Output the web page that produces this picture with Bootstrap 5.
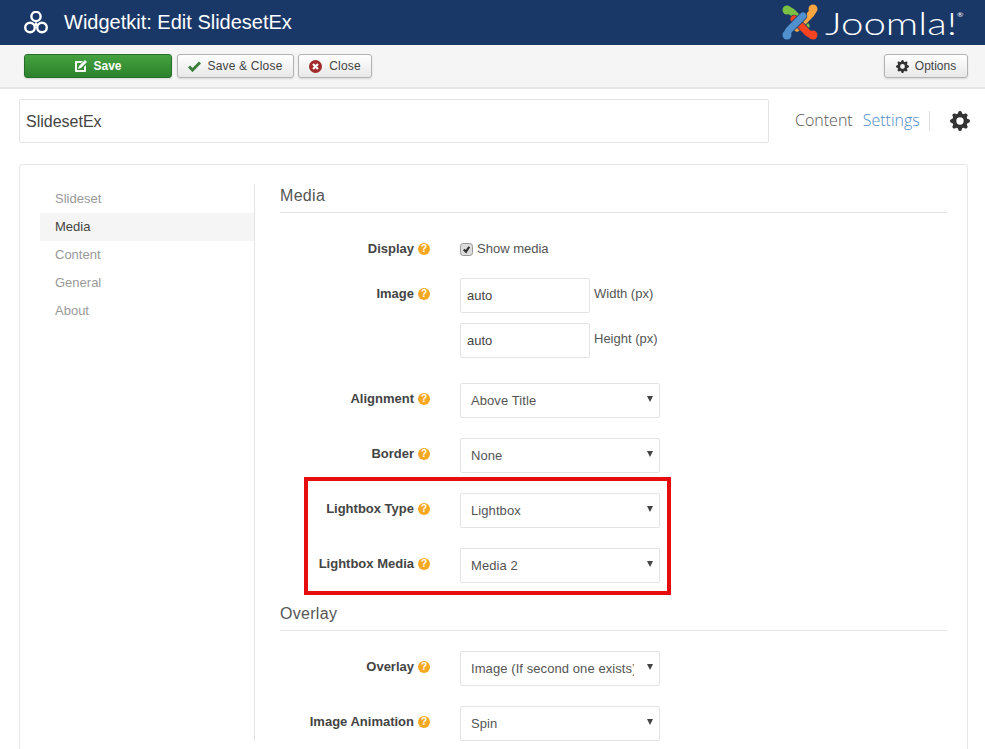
<!DOCTYPE html>
<html lang="en">
<head>
<meta charset="utf-8">
<title>Widgetkit: Edit SlidesetEx</title>
<link href="https://cdn.jsdelivr.net/npm/bootstrap@5.3.0/dist/css/bootstrap.min.css" rel="stylesheet">
<style>
html,body{height:749px;overflow:hidden}
body{font-family:"Liberation Sans",Arial,sans-serif;font-size:13px;color:#555;background:#fff}
.wk-head{height:45px;background:#1a3867;color:#fff;padding-left:24px}
.wk-title{font-size:20px;line-height:45px;margin:0 0 0 16px;font-weight:400;color:#fff}
.wk-logo-word{display:inline-block;width:134px;margin:0 26px 0 6px;font-family:"Lato","Open Sans",sans-serif;font-weight:300;font-size:31px;line-height:45px;color:#fff;white-space:nowrap;transform:scaleX(1.3);transform-origin:left center;position:relative;top:1px}
.wk-logo-word sup{font-size:6px;top:-18px;letter-spacing:0;font-weight:400;position:relative;vertical-align:baseline;margin-left:0}
.wk-bar{height:44px;background:#f5f5f5;border-bottom:2px solid #e6e6e6;padding:9px 17px 0 24px}
.wk-btn{height:24px;padding:0;font-size:12px;line-height:22px;letter-spacing:.2px;white-space:nowrap;color:#444;background:linear-gradient(#fff,#e8e8e8);border:1px solid #b3b3b3;border-radius:3px;display:inline-flex;align-items:center;justify-content:center;gap:6px;box-shadow:0 1px 2px rgba(0,0,0,.12)}
.wk-btn:hover{color:#444;border-color:#b3b3b3}
.wk-save{width:148px;font-weight:700;letter-spacing:0;color:#fff;background:linear-gradient(#45a23f,#2c822d);border-color:#24702a}
.wk-save:hover{color:#fff;border-color:#24702a}
.wk-close-x{width:117px;margin-left:5px}
.wk-close-c{width:74px;margin-left:4px;gap:7px}
.wk-opt{width:84px;letter-spacing:0}
.wk-top{padding:10px 16px 0 19px}
.wk-name{flex:none;width:750px;height:44px;border:1px solid #e3e3e3;border-radius:2px;font-size:16px;color:#444;padding:2px 6px 0;background:#fff;box-shadow:none}
.wk-tabs{font-family:"Open Sans",sans-serif;font-weight:300;font-size:16px;line-height:20px}
.wk-tabs a{text-decoration:none;padding-bottom:2px}
.wk-tab-c{color:#555;margin-left:26px}
.wk-tab-s{color:#4f8ac6;margin-left:10px}
.wk-sep{width:1px;height:20px;background:#ddd;margin:0 20px 0 9px}
.wk-card{margin:21px 17px 0 19px;border:1px solid #e6e6e6;border-radius:3px;padding:20px;background:#fff;height:620px}
.wk-side{width:215px;border-right:1px solid #e3e3e3;height:557px;flex:none;margin-top:-1px;padding-top:1px}
.wk-side a{display:block;height:28px;line-height:28px;padding-left:15px;color:#999;text-decoration:none;font-size:13px}
.wk-side a.wk-on{background:#f5f5f5;color:#444}
.wk-main{margin-left:25px;flex:1 1 auto}
.wk-h{font-size:16px;letter-spacing:.3px;font-weight:400;color:#555;height:28px;line-height:22px;margin:0;border-bottom:1px solid #e3e3e3}
.wk-mb{margin-bottom:25px}
.wk-mb20{margin-bottom:20px}
.wk-row{display:flex;margin-bottom:20px}
.wk-row.wk-gap{margin-bottom:25px}
.wk-row.wk-first{margin-bottom:19px;padding-top:1px}
.wk-lab{width:150px;flex:none;margin-right:30px;text-align:right;font-weight:700;color:#444;line-height:20px;padding-top:6px;margin-bottom:0;display:flex;justify-content:flex-end;align-items:flex-start;gap:4px}
.wk-lab.wk-flat{padding-top:0}
.wk-q{width:12px;height:12px;border-radius:50%;background:#f7a823;color:#fff;font-size:10px;font-weight:700;line-height:12px;text-align:center;margin-top:4px;flex:none}
.wk-stack{display:flex;flex-direction:column;gap:10px}
.wk-in{width:130px;height:35px;border:1px solid #e3e3e3;border-radius:2px;font-size:13px;color:#444;padding:0 6px;box-shadow:none}
.wk-sel{width:200px;height:35px;border:1px solid #e3e3e3;border-radius:2px;font-size:13px;letter-spacing:.08px;color:#555;padding:1px 25px 0 10px;box-shadow:none;background-size:6px 6px;background-position:right 6px top 12px;background-image:url("data:image/svg+xml,%3csvg xmlns='http://www.w3.org/2000/svg' viewBox='0 0 6 6'%3e%3cpath fill='%23444' d='M0 0h6L3 6z'/%3e%3c/svg%3e")}
.wk-unit{margin-left:4px;line-height:20px;padding-top:6px;color:#555}
.wk-check{width:13px;height:13px;margin:0 4px 0 0;flex:none;border-color:#999;border-radius:2px}
.wk-check:checked{background-color:#ddd;border-color:#999;background-size:100% 100%;background-image:url("data:image/svg+xml,%3csvg xmlns='http://www.w3.org/2000/svg' viewBox='0 0 20 20'%3e%3cpath fill='none' stroke='%23333' stroke-width='4' d='M5 10l4 4 6-9'/%3e%3c/svg%3e")}
.wk-chk-txt{line-height:20px;color:#555;display:flex;align-items:center;margin:0}
.wk-hl{position:relative}
.wk-box{position:absolute;left:24px;top:-16px;width:367px;height:118px;border:4px solid #e50d0d;pointer-events:none}
</style>
</head>
<body>
<header class="wk-head d-flex align-items-center">
  <svg width="24" height="24" viewBox="0 0 24 24" fill="none" stroke="#fff" stroke-width="2.4">
    <circle cx="12" cy="5.500" r="4.600"/><circle cx="6" cy="16.500" r="4.800"/><circle cx="18" cy="16.500" r="4.800"/>
    <path d="M12 10.500l-2.600 4.600h5.200z" fill="#fff" stroke="none"/>
  </svg>
  <h1 class="wk-title flex-grow-1">Widgetkit: Edit SlidesetEx</h1>
  <svg width="37" height="37" viewBox="0 0 37 37" fill="none" stroke-linecap="round">
    <path stroke="#1a3867" stroke-width="8.500" d="M5 6C9 6 11 9 13 11L24 22"/>
    <path stroke="#7ac143" stroke-width="7" d="M5 6C9 6 11 9 13 11L24 22"/>
    <path stroke="#1a3867" stroke-width="8.500" d="M31 5C31 9 28 11 26 13L15 24"/>
    <path stroke="#f9a541" stroke-width="7" d="M31 5C31 9 28 11 26 13L15 24"/>
    <path stroke="#1a3867" stroke-width="8.500" d="M31 31C27 31 25 28 23 26L12 15"/>
    <path stroke="#f44321" stroke-width="7" d="M31 31C27 31 25 28 23 26L12 15"/>
    <path stroke="#1a3867" stroke-width="8.500" d="M5 31C5 27 8 25 10 23L21 12"/>
    <path stroke="#5091cd" stroke-width="7" d="M5 31C5 27 8 25 10 23L21 12"/>
    <circle cx="5" cy="6" r="4.500" fill="#7ac143"/><circle cx="31" cy="5" r="4.500" fill="#f9a541"/>
    <circle cx="31" cy="31" r="4.500" fill="#f44321"/><circle cx="5" cy="31" r="4.500" fill="#5091cd"/>
  </svg>
  <span class="wk-logo-word">Joomla!<sup>®</sup></span>
</header>

<div class="wk-bar d-flex">
  <a href="#" class="btn wk-btn wk-save">
    <svg width="13" height="13" viewBox="0 0 13 13"><path fill="#fff" d="M2 1h7L7 3H3v7h7V7l2-2v6a1 1 0 0 1-1 1H2a1 1 0 0 1-1-1V2a1 1 0 0 1 1-1z"/><path fill="#fff" d="M11 0l2 2-6 6-3 1 1-3z"/></svg>Save</a>
  <a href="#" class="btn wk-btn wk-close-x">
    <svg width="13" height="11" viewBox="0 0 13 11"><path fill="none" stroke="#3b7d3a" stroke-width="3" d="M1 5.500l3.500 3.500L12 1.500"/></svg>Save &amp; Close</a>
  <a href="#" class="btn wk-btn wk-close-c">
    <svg width="13" height="13" viewBox="0 0 13 13"><circle cx="6.500" cy="6.500" r="6.500" fill="#a12a2a"/><path stroke="#fff" stroke-width="2.200" d="M4 4l5 5M9 4l-5 5"/></svg>Close</a>
  <a href="#" class="btn wk-btn wk-opt ms-auto">
    <svg width="13" height="13" viewBox="0 0 16 16"><path fill="#333" fill-rule="evenodd" d="M9.405 1.050c-.413-1.400-2.397-1.400-2.810 0l-.1.340a1.464 1.464 0 0 1-2.105.872l-.31-.17c-1.283-.698-2.686.705-1.987 1.987l.169.311c.446.82.023 1.841-.872 2.105l-.34.1c-1.400.413-1.400 2.397 0 2.810l.34.1a1.464 1.464 0 0 1 .872 2.105l-.17.31c-.698 1.283.705 2.686 1.987 1.987l.311-.169a1.464 1.464 0 0 1 2.105.872l.1.34c.413 1.400 2.397 1.400 2.810 0l.1-.34a1.464 1.464 0 0 1 2.105-.872l.31.17c1.283.698 2.686-.705 1.987-1.987l-.169-.311a1.464 1.464 0 0 1 .872-2.105l.34-.1c1.400-.413 1.400-2.397 0-2.810l-.34-.1a1.464 1.464 0 0 1-.872-2.105l.17-.31c.698-1.283-.705-2.686-1.987-1.987l-.311.169a1.464 1.464 0 0 1-2.105-.872l-.1-.34zM8 10.930a2.929 2.929 0 1 1 0-5.860 2.929 2.929 0 0 1 0 5.858z"/></svg>Options</a>
</div>

<div class="wk-top d-flex align-items-center">
  <input class="form-control wk-name" type="text" value="SlidesetEx">
  <nav class="wk-tabs d-flex align-items-center">
    <a href="#" class="wk-tab-c">Content</a>
    <a href="#" class="wk-tab-s">Settings</a>
    <span class="wk-sep"></span>
    <svg width="20" height="20" viewBox="0 0 16 16"><path fill="#333" fill-rule="evenodd" d="M9.405 1.050c-.413-1.400-2.397-1.400-2.810 0l-.1.340a1.464 1.464 0 0 1-2.105.872l-.31-.17c-1.283-.698-2.686.705-1.987 1.987l.169.311c.446.82.023 1.841-.872 2.105l-.34.1c-1.400.413-1.400 2.397 0 2.810l.34.1a1.464 1.464 0 0 1 .872 2.105l-.17.31c-.698 1.283.705 2.686 1.987 1.987l.311-.169a1.464 1.464 0 0 1 2.105.872l.1.34c.413 1.400 2.397 1.400 2.810 0l.1-.34a1.464 1.464 0 0 1 2.105-.872l.31.17c1.283.698 2.686-.705 1.987-1.987l-.169-.311a1.464 1.464 0 0 1 .872-2.105l.34-.1c1.400-.413 1.400-2.397 0-2.810l-.34-.1a1.464 1.464 0 0 1-.872-2.105l.17-.31c.698-1.283-.705-2.686-1.987-1.987l-.311.169a1.464 1.464 0 0 1-2.105-.872l-.1-.34zM8 10.930a2.929 2.929 0 1 1 0-5.860 2.929 2.929 0 0 1 0 5.858z"/></svg>
  </nav>
</div>

<div class="wk-card d-flex">
  <nav class="wk-side">
    <a href="#">Slideset</a>
    <a href="#" class="wk-on">Media</a>
    <a href="#">Content</a>
    <a href="#">General</a>
    <a href="#">About</a>
  </nav>
  <main class="wk-main">
    <h2 class="wk-h wk-mb">Media</h2>
    <div class="wk-row wk-first">
      <label class="wk-lab wk-flat">Display <span class="wk-q">?</span></label>
      <label class="wk-chk-txt"><input class="form-check-input wk-check" type="checkbox" checked>Show media</label>
    </div>
    <div class="wk-row wk-gap">
      <label class="wk-lab">Image <span class="wk-q">?</span></label>
      <div class="wk-stack">
        <div class="d-flex"><input class="form-control wk-in" type="text" value="auto"><span class="wk-unit">Width (px)</span></div>
        <div class="d-flex"><input class="form-control wk-in" type="text" value="auto"><span class="wk-unit">Height (px)</span></div>
      </div>
    </div>
    <div class="wk-row">
      <label class="wk-lab">Alignment <span class="wk-q">?</span></label>
      <select class="form-select wk-sel"><option>Above Title</option></select>
    </div>
    <div class="wk-row">
      <label class="wk-lab">Border <span class="wk-q">?</span></label>
      <select class="form-select wk-sel"><option>None</option></select>
    </div>
    <div class="wk-hl">
      <div class="wk-row">
        <label class="wk-lab">Lightbox Type <span class="wk-q">?</span></label>
        <select class="form-select wk-sel"><option>Lightbox</option></select>
      </div>
      <div class="wk-row">
        <label class="wk-lab">Lightbox Media <span class="wk-q">?</span></label>
        <select class="form-select wk-sel"><option>Media 2</option></select>
      </div>
      <div class="wk-box"></div>
    </div>
    <h2 class="wk-h wk-mb20">Overlay</h2>
    <div class="wk-row">
      <label class="wk-lab">Overlay <span class="wk-q">?</span></label>
      <select class="form-select wk-sel"><option>Image (If second one exists)</option></select>
    </div>
    <div class="wk-row">
      <label class="wk-lab">Image Animation <span class="wk-q">?</span></label>
      <select class="form-select wk-sel"><option>Spin</option></select>
    </div>
  </main>
</div>
</body>
</html>
